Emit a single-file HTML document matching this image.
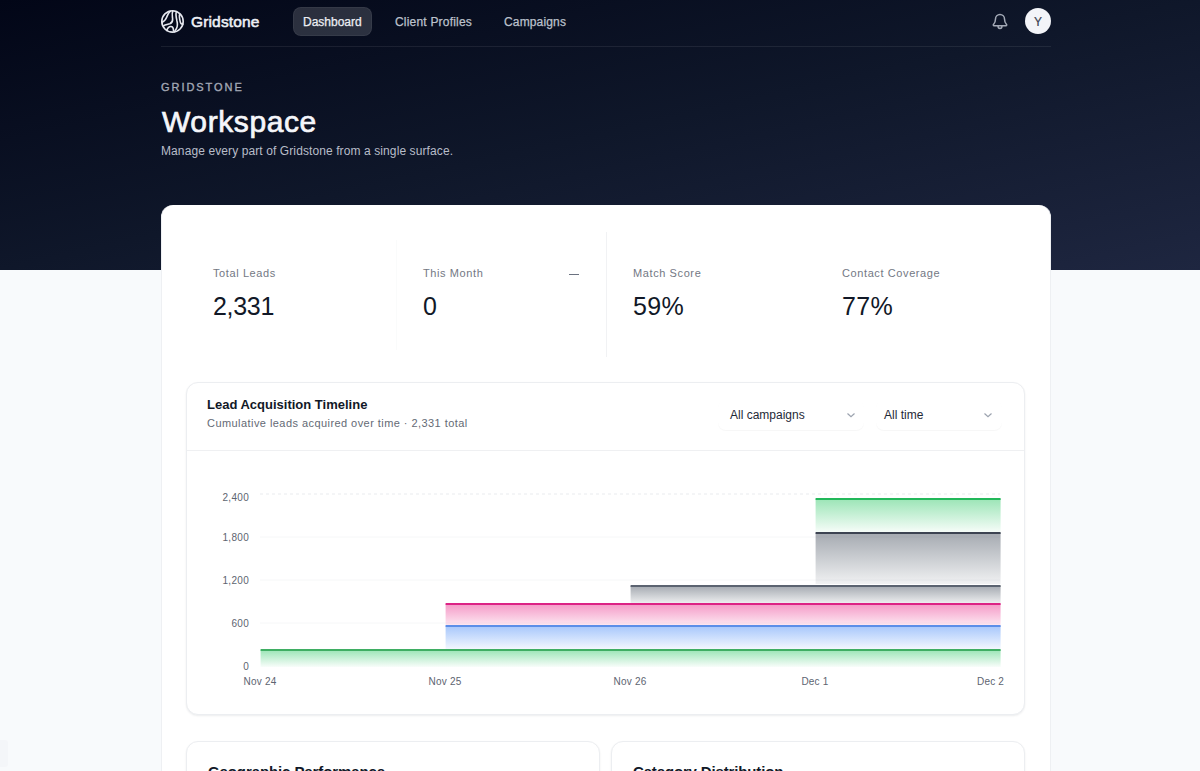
<!DOCTYPE html>
<html>
<head>
<meta charset="utf-8">
<style>
*{box-sizing:border-box;margin:0;padding:0}
html,body{width:1200px;height:771px;overflow:hidden}
body{background:#f8fafc;font-family:"Liberation Sans",sans-serif;position:relative}
.abs{position:absolute;white-space:nowrap;line-height:1}
.hero{position:absolute;left:0;top:0;width:1200px;height:270px;
  background:linear-gradient(to bottom right,#020617 0%,#0f172a 50%,#1e2640 100%)}
.navline{position:absolute;left:161px;top:46px;width:890px;height:1px;background:rgba(255,255,255,0.08)}
.pill{position:absolute;left:293px;top:7px;width:79px;height:29px;border-radius:8px;background:rgba(255,255,255,0.15);box-shadow:inset 0 0 0 1px rgba(255,255,255,0.05)}
.nav{font-size:12px;color:#bcc1cc;-webkit-text-stroke:0.25px #bcc1cc}
.card{position:absolute;left:161px;top:205px;width:890px;height:700px;background:#fff;border-radius:12px;border:1px solid #eef0f3;border-top:none}
.lbl{font-size:11px;color:#737884;letter-spacing:0.6px}
.val{font-size:25px;color:#111827;letter-spacing:-0.3px}
.ccard{position:absolute;background:#fff;border:1px solid #eceef1;border-radius:12px;box-shadow:0 1px 2px rgba(16,24,40,0.08)}
.ylab{font-size:10px;color:#5d6470;letter-spacing:0.3px;text-align:right;width:40px}
.xlab{font-size:10px;color:#5d6470;letter-spacing:0.2px;text-align:center;width:60px}
</style>
</head>
<body>
<div class="hero"></div>
<div class="navline"></div>

<!-- logo -->
<svg class="abs" style="left:160px;top:9px" width="25" height="25" viewBox="0 0 25 25" fill="none" stroke="#e6e8ef" stroke-width="1.6" stroke-linecap="round">
  <circle cx="12.5" cy="12.4" r="10.7"/>
  <path d="M10.2 2.4 C8.2 3.8 7.6 6 6.8 8 C6 10 4.8 12.2 2.2 13.2"/>
  <path d="M12.8 2.2 C11.6 4.4 12.4 7.4 12.6 10 C12.8 12.6 11.8 14 9.8 14.8 C7.6 15.6 5.4 15.6 3.8 16.6"/>
  <path d="M16.2 3.4 C15.6 5.6 16.2 8.4 16.8 11.2 C17.6 14.4 17.6 17.6 16.4 19.6 C15.8 20.6 15 21.6 14.4 22.6"/>
  <path d="M19.6 5.4 C19 7.4 19.6 10 20.2 12.6 C20.6 14.4 21.6 15.4 22.8 15.2"/>
  <path d="M6.8 21.4 C7.4 19.4 8.8 17.6 10.8 17.5 C12.6 17.4 13.4 19 13.5 21.6"/>
</svg>
<div class="abs" style="left:191px;top:13.5px;font-size:15.5px;font-weight:400;color:#eef0f5;letter-spacing:0.15px;-webkit-text-stroke:0.55px #eef0f5">Gridstone</div>

<div class="pill"></div>
<div class="abs nav" style="left:303px;top:16px;color:#eceef3;-webkit-text-stroke:0.25px #eceef3">Dashboard</div>
<div class="abs nav" style="left:395px;top:16px;letter-spacing:0.2px">Client Profiles</div>
<div class="abs nav" style="left:504px;top:16px;letter-spacing:0.15px">Campaigns</div>

<!-- bell -->
<svg class="abs" style="left:991.3px;top:12.8px" width="18" height="18" viewBox="0 0 24 24" fill="none" stroke="#a3a9b6" stroke-width="2" stroke-linecap="round" stroke-linejoin="round">
  <path d="M9.4 17.2a2.6 3.4 0 0 0 5.2 0"/>
  <path d="M3.262 15.326A1 1 0 0 0 4 17h16a1 1 0 0 0 .74-1.673C19.41 13.956 18 12.499 18 8A6 6 0 0 0 6 8c0 4.499-1.411 5.956-2.738 7.326"/>
</svg>
<!-- avatar -->
<div class="abs" style="left:1025px;top:8px;width:26px;height:26px;border-radius:50%;background:#f3f4f8"></div>
<div class="abs" style="left:1025px;top:16px;width:26px;text-align:center;font-size:12px;color:#3b4150;-webkit-text-stroke:0.2px #3b4150">Y</div>

<div class="abs" style="left:161px;top:82px;font-size:11px;font-weight:400;color:#a3a8b5;letter-spacing:1.95px;-webkit-text-stroke:0.35px #a3a8b5">GRIDSTONE</div>
<div class="abs" style="left:162px;top:107px;font-size:30px;font-weight:400;color:#f5f6fa;letter-spacing:0.6px;-webkit-text-stroke:0.7px #f5f6fa">Workspace</div>
<div class="abs" style="left:161px;top:145px;font-size:12px;color:#b8bdc9;letter-spacing:0.1px">Manage every part of Gridstone from a single surface.</div>

<div class="card"></div>

<!-- stats -->
<div class="abs" style="left:396px;top:240px;width:1px;height:110px;background:#fafbfb"></div>
<div class="abs" style="left:606px;top:232px;width:1px;height:125px;background:#f1f2f4"></div>

<div class="abs lbl" style="left:213px;top:268px">Total Leads</div>
<div class="abs val" style="left:213px;top:294px">2,331</div>
<div class="abs lbl" style="left:423px;top:268px">This Month</div>
<div class="abs" style="left:569px;top:274px;width:10px;height:1px;background:#6b7280"></div>
<div class="abs val" style="left:423px;top:294px">0</div>
<div class="abs lbl" style="left:633px;top:268px">Match Score</div>
<div class="abs val" style="left:633px;top:294px;letter-spacing:0.3px">59%</div>
<div class="abs lbl" style="left:842px;top:268px">Contact Coverage</div>
<div class="abs val" style="left:842px;top:294px;letter-spacing:0.3px">77%</div>

<!-- chart card -->
<div class="ccard" style="left:186px;top:382px;width:839px;height:333px"></div>
<div class="abs" style="left:187px;top:450px;width:837px;height:1px;background:#eff0f2"></div>
<div class="abs" style="left:207px;top:398px;font-size:13px;font-weight:700;color:#111827">Lead Acquisition Timeline</div>
<div class="abs" style="left:207px;top:418px;font-size:11px;color:#646a75;letter-spacing:0.44px">Cumulative leads acquired over time · 2,331 total</div>

<div class="abs" style="left:718px;top:400px;width:146px;height:30px;border-radius:8px;box-shadow:0 1px 1px rgba(16,24,40,0.035)"></div>
<div class="abs" style="left:876px;top:400px;width:126px;height:30px;border-radius:8px;box-shadow:0 1px 1px rgba(16,24,40,0.035)"></div>
<div class="abs" style="left:730px;top:409px;font-size:12px;color:#1f2937">All campaigns</div>
<div class="abs" style="left:884px;top:409px;font-size:12px;color:#1f2937">All time</div>
<svg class="abs" style="left:846px;top:411px" width="10" height="8" viewBox="0 0 10 8" fill="none" stroke="#9ca3af" stroke-width="1.2"><path d="M1.5 2.5 L5 5.8 L8.5 2.5"/></svg>
<svg class="abs" style="left:983px;top:411px" width="10" height="8" viewBox="0 0 10 8" fill="none" stroke="#9ca3af" stroke-width="1.2"><path d="M1.5 2.5 L5 5.8 L8.5 2.5"/></svg>

<!-- chart -->
<svg class="abs" style="left:0;top:0" width="1200" height="771">
  <defs>
    <linearGradient id="gG" x1="0" y1="0" x2="0" y2="1"><stop offset="0" stop-color="#22c55e" stop-opacity="0.45"/><stop offset="1" stop-color="#22c55e" stop-opacity="0.03"/></linearGradient>
    <linearGradient id="gB" x1="0" y1="0" x2="0" y2="1"><stop offset="0" stop-color="#3b82f6" stop-opacity="0.45"/><stop offset="1" stop-color="#3b82f6" stop-opacity="0.05"/></linearGradient>
    <linearGradient id="gP" x1="0" y1="0" x2="0" y2="1"><stop offset="0" stop-color="#ec4899" stop-opacity="0.55"/><stop offset="1" stop-color="#ec4899" stop-opacity="0.12"/></linearGradient>
    <linearGradient id="gK" x1="0" y1="0" x2="0" y2="1"><stop offset="0" stop-color="#4b5563" stop-opacity="0.5"/><stop offset="1" stop-color="#4b5563" stop-opacity="0.08"/></linearGradient>
  </defs>
  <line x1="260" y1="494" x2="1000" y2="494" stroke="#e9ebee" stroke-width="1" stroke-dasharray="3 3"/>
  <g stroke="#f6f7f8" stroke-width="1">
    <line x1="260" y1="537" x2="1000" y2="537"/>
    <line x1="260" y1="580" x2="1000" y2="580"/>
    <line x1="260" y1="623" x2="1000" y2="623"/>
  </g>
  <!-- bands -->
  <rect x="260.6" y="650" width="740" height="17" fill="url(#gG)"/>
  <rect x="445.6" y="626" width="555" height="24" fill="url(#gB)"/>
  <rect x="445.6" y="604" width="555" height="22" fill="url(#gP)"/>
  <rect x="630.6" y="586" width="370" height="18" fill="url(#gK)"/>
  <rect x="815.6" y="533" width="185" height="51" fill="url(#gK)"/>
  <rect x="815.6" y="499" width="185" height="34" fill="url(#gG)"/>
  <g stroke-width="2" fill="none">
    <line x1="260.6" y1="650" x2="1000.6" y2="650" stroke="#3fae63"/>
    <line x1="445.6" y1="626" x2="1000.6" y2="626" stroke="#5b8ee8"/>
    <line x1="445.6" y1="604" x2="1000.6" y2="604" stroke="#dc2385"/>
    <line x1="630.6" y1="586" x2="1000.6" y2="586" stroke="#5b6370"/>
    <line x1="815.6" y1="533" x2="1000.6" y2="533" stroke="#3d4452"/>
    <line x1="815.6" y1="499" x2="1000.6" y2="499" stroke="#22b85a"/>
  </g>
</svg>
<div class="abs ylab" style="left:209px;top:493px">2,400</div>
<div class="abs ylab" style="left:209px;top:533px">1,800</div>
<div class="abs ylab" style="left:209px;top:576px">1,200</div>
<div class="abs ylab" style="left:209px;top:619px">600</div>
<div class="abs ylab" style="left:209px;top:662px">0</div>
<div class="abs xlab" style="left:230px;top:677px">Nov 24</div>
<div class="abs xlab" style="left:415px;top:677px">Nov 25</div>
<div class="abs xlab" style="left:600px;top:677px">Nov 26</div>
<div class="abs xlab" style="left:785px;top:677px">Dec 1</div>
<div class="abs" style="left:977px;top:677px;font-size:10px;color:#5d6470;letter-spacing:0.2px">Dec 2</div>

<div class="abs" style="left:0;top:740px;width:8px;height:27px;background:#f4f6f9;border-radius:0 3px 3px 0"></div>
<!-- lower cards -->
<div class="ccard" style="left:186px;top:741px;width:414px;height:100px"></div>
<div class="ccard" style="left:611px;top:741px;width:414px;height:100px"></div>
<div class="abs" style="left:208px;top:764px;font-size:15px;font-weight:700;color:#111827;letter-spacing:-0.1px">Geographic Performance</div>
<div class="abs" style="left:633px;top:764px;font-size:15px;font-weight:700;color:#111827;letter-spacing:-0.15px">Category Distribution</div>
</body>
</html>
